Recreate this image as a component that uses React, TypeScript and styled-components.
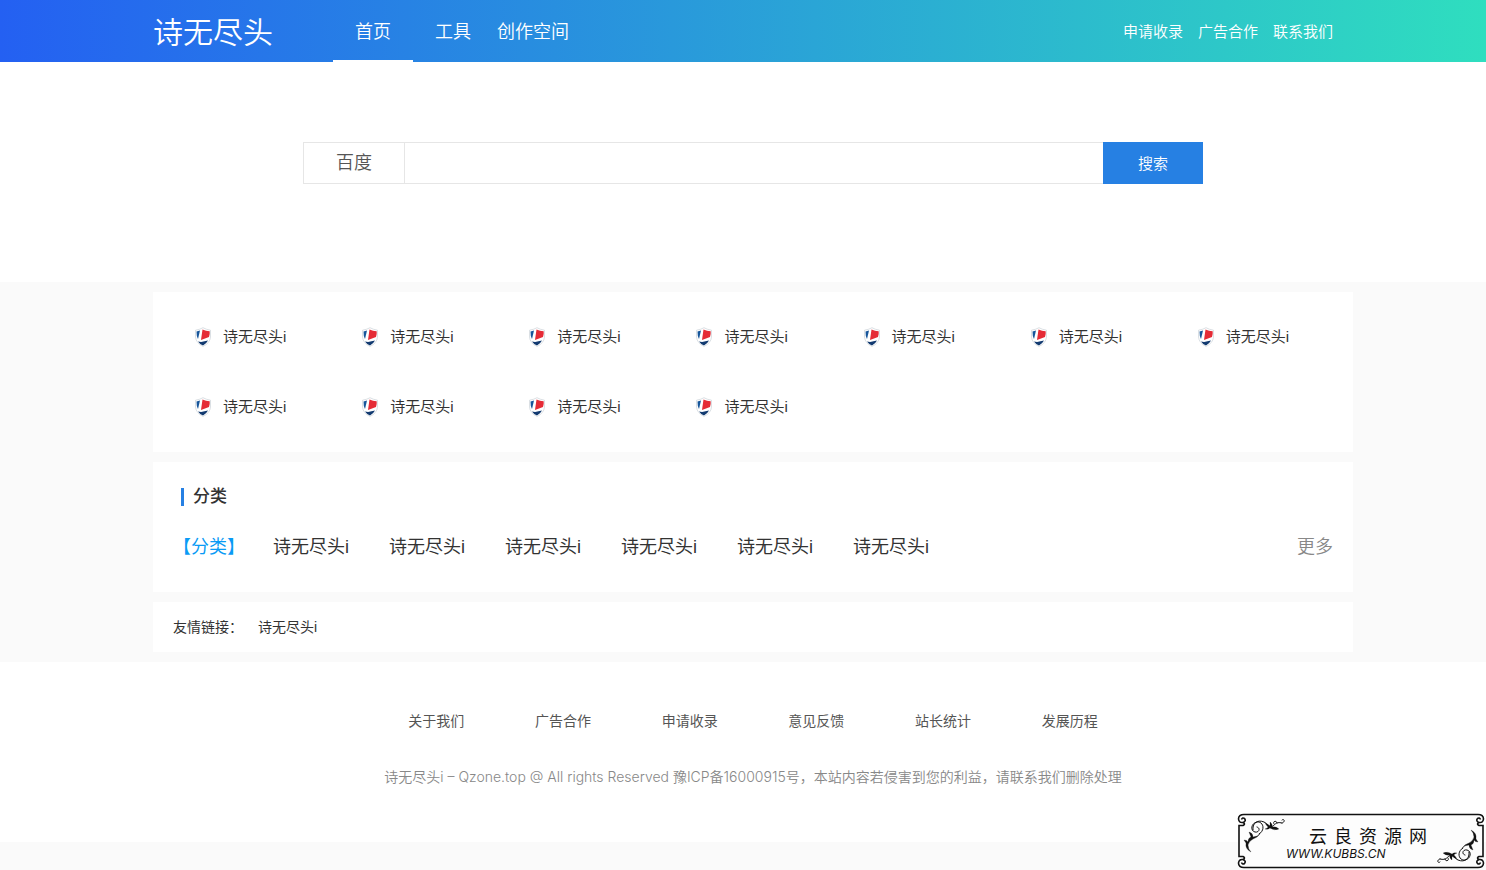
import React from "react";
import styled, { createGlobalStyle } from "styled-components";

const GlobalStyle = createGlobalStyle`
  * { box-sizing: border-box; }
  body {
    margin: 0;
    background: #fafafa;
    color: #333;
    font-family: "Liberation Sans", "Noto Sans CJK SC", sans-serif;
    font-size: 14px;
  }
  a { color: inherit; text-decoration: none; }
  ul { list-style: none; margin: 0; padding: 0; }
  button, input, select { font-family: inherit; }
`;

const Page = styled.div`
  position: relative;
  padding-bottom: 28px;
`;

const Container = styled.div`
  max-width: 1200px;
  margin: 0 auto;
`;

const Header = styled.header`
  padding-left: 20px;
  background: linear-gradient(90deg, #2460f2, #2fdebf);
  color: #fff;
  font-family: "Noto Sans CJK SC", sans-serif;
  font-weight: 350;
`;

const HeaderInner = styled(Container)`
  display: flex;
  height: 62px;
  padding-right: 20px;
`;

const Logo = styled.a`
  width: 180px;
  font-size: 30px;
  line-height: 60px;
`;

const Nav = styled.nav`
  display: flex;
  flex: 1;
`;

const NavLink = styled.a<{ $active?: boolean }>`
  width: 80px;
  border-bottom: 2px solid ${(p) => (p.$active ? "#fff" : "transparent")};
  font-size: 18px;
  line-height: 60px;
  text-align: center;
`;

const TopLinks = styled.nav`
  display: flex;
  gap: 15px;
  font-size: 15px;
  line-height: 62px;
`;

const SearchArea = styled.section`
  padding: 80px 0 98px 20px;
  background: #fff;
`;

const SearchForm = styled.form`
  display: flex;
  max-width: 900px;
  height: 42px;
  margin: 0 auto;
`;

const EngineSelect = styled.select`
  appearance: none;
  width: 102px;
  padding: 0;
  border: 1px solid #e6e6e6;
  border-radius: 0;
  background: #fff;
  color: #555;
  font-size: 18px;
  font-weight: 350;
  text-align: center;
  text-align-last: center;
`;

const SearchInput = styled.input`
  flex: 1;
  min-width: 0;
  padding: 0 10px;
  border: solid #e6e6e6;
  border-width: 1px 0;
  outline: none;
  font-size: 16px;
`;

const SearchButton = styled.button`
  width: 100px;
  padding: 0 0 2px;
  border: 0;
  background: #2680e3;
  color: #fff;
  font-size: 15px;
  font-weight: 350;
`;

const Main = styled.main`
  padding: 10px 0 10px 20px;
`;

const Stack = styled(Container)`
  display: grid;
  gap: 10px;
`;

const Card = styled.section`
  background: #fff;
`;

const SiteGrid = styled.ul`
  display: grid;
  grid-template-columns: repeat(7, 1fr);
  padding: 10px 15px;
`;

const SiteLink = styled.a`
  display: flex;
  align-items: center;
  gap: 10px;
  height: 70px;
  padding-left: 25px;
  font-size: 15px;
  line-height: 70px;
`;

const Category = styled(Card)`
  padding: 20px;
`;

const CategoryTitle = styled.h2`
  display: flex;
  align-items: center;
  gap: 9px;
  height: 30px;
  margin: 0 0 10px 8px;
  font-size: 17px;
  font-weight: 500;
  line-height: 32px;

  &::before {
    content: "";
    width: 3px;
    height: 18px;
    background: #2680e3;
  }
`;

const CategoryRow = styled.div`
  display: flex;
  height: 50px;
  font-size: 18px;
  line-height: 50px;
`;

const CategoryName = styled.a`
  width: 100px;
  color: #0a9bf5;
`;

const CategoryLinks = styled.ul`
  display: flex;
  flex: 1;
  gap: 40px;
`;

const MoreLink = styled.a`
  color: #888;
  font-weight: 350;
`;

const Friends = styled(Card)`
  display: flex;
  gap: 15px;
  padding: 0 20px;
  line-height: 50px;
`;

const Footer = styled.footer`
  padding: 34px 0 40px 20px;
  background: #fff;
  text-align: center;
`;

const FooterLinks = styled.nav`
  display: grid;
  grid-template-columns: repeat(6, 1fr);
  max-width: 760px;
  margin: 0 auto;
  color: #555;
  line-height: 50px;
`;

const Copyright = styled.p`
  margin: 6px 0 0;
  color: #888;
  font-family: Inter, "Noto Sans CJK SC", sans-serif;
  font-weight: 350;
  line-height: 50px;
`;

const Badge = styled.a`
  position: absolute;
  right: 0;
  bottom: 0;
  width: 250px;
  height: 58px;
`;

const ShieldIcon = () => (
  <svg width="20" height="20" viewBox="0 0 20 20" aria-hidden="true">
    <path d="M10 .7Q13 2.500 17.500 3.200V10Q17 16 10 19.500 3 16 2.500 10V3.200Q7 2.500 10 .7Z" fill="#fff" stroke="#ccd3d8" strokeWidth=".7" />
    <path d="M3.500 4.500 7 3.400 5 12Q3.300 9 3.500 4.500Z" fill="#17569b" />
    <path d="M9.500 2.500Q13 4 16.700 4.300 17 7 16 10L8 13Z" fill="#e52b36" />
    <path d="M5 14.500 8 15 15 13.500Q13.500 16.500 10 18.600 6.500 17 5 14.500Z" fill="#123a70" />
  </svg>
);

const Corner = () => (
  <path
    d="M125 2.500H8Q2.500 2.500 2.500 7Q3 11 7 10.500Q10.500 9 8.500 6.500Q6.500 5 5.500 7.500M7 10.500Q10 12 7 13.500H3V29"
    fill="none"
    stroke="#111"
    strokeWidth="1.600"
  />
);

const Flourish = () => (
  <g stroke="#111" strokeLinecap="round">
    <path
      d="M23 22C30 18 27 9 21 10C15 11 14 19 19 20C23 21 25 16 21 15M17 18C16 12 21 7 28 10C32 12 34 16 41 17M35 15C39 14 39 9 46 11M38 12C36 9 41 8 41 11M46 11C50 10 48 6 46 8"
      fill="none"
      strokeWidth="1"
    />
    <path d="M24 22Q21 26 17 27Q13 29 12 33Q12 37 15 40Q9 37 10 31L8 28Q11 28 12 30Q12 26 15 25L13 20Q17 21 17 25Q21 25 24 22Z" fill="#111" strokeWidth=".3" />
    <path d="M29 11Q32 13 34 14L34 10Q37 12 36 15Q40 14 43 17Q38 19 34 16Q32 18 29 17Q32 16 32 15Q30 13 29 11Z" fill="#111" strokeWidth=".2" />
  </g>
);

const Watermark = () => (
  <svg width="250" height="58" viewBox="0 0 250 58" role="img" aria-label="云良资源网">
    <rect x="3" y="3" width="244" height="52" fill="#fdfdfd" />
    <Corner />
    <g transform="translate(250 0) scale(-1 1)"><Corner /></g>
    <g transform="translate(0 58) scale(1 -1)"><Corner /></g>
    <g transform="rotate(180 125 29)"><Corner /></g>
    <Flourish />
    <g transform="rotate(180 125 29)"><Flourish /></g>
    <g fill="#111" fontStyle="italic">
      <text y="31" fontSize="18" fontWeight="400" fontStyle="normal" fontFamily="'Noto Sans CJK SC', sans-serif">
        <tspan x="73">云</tspan>
        <tspan x="98">良</tspan>
        <tspan x="123">资</tspan>
        <tspan x="148">源</tspan>
        <tspan x="173">网</tspan>
      </text>
      <text x="50" y="46" fontSize="12" fontFamily="Inter, sans-serif">
        WWW.KUBBS.CN
      </text>
    </g>
  </svg>
);

const siteName = "诗无尽头i";
const sites = Array.from({ length: 11 }, () => siteName);
const categoryItems = Array.from({ length: 6 }, () => siteName);
const topLinks = ["申请收录", "广告合作", "联系我们"];
const footerLinks = ["关于我们", "广告合作", "申请收录", "意见反馈", "站长统计", "发展历程"];

export default function App() {
  return (
    <Page>
      <GlobalStyle />
      <Header>
        <HeaderInner>
          <Logo href="#">诗无尽头</Logo>
          <Nav>
            <NavLink href="#" $active>首页</NavLink>
            <NavLink href="#">工具</NavLink>
            <NavLink href="#">创作空间</NavLink>
          </Nav>
          <TopLinks>
            {topLinks.map((label) => <a href="#" key={label}>{label}</a>)}
          </TopLinks>
        </HeaderInner>
      </Header>

      <SearchArea>
        <SearchForm onSubmit={(e) => e.preventDefault()}>
          <EngineSelect aria-label="搜索引擎">
            <option>百度</option>
          </EngineSelect>
          <SearchInput type="text" aria-label="搜索内容" />
          <SearchButton type="submit">搜索</SearchButton>
        </SearchForm>
      </SearchArea>

      <Main>
        <Stack>
          <Card>
            <SiteGrid>
              {sites.map((name, i) => (
                <li key={i}>
                  <SiteLink href="#"><ShieldIcon />{name}</SiteLink>
                </li>
              ))}
            </SiteGrid>
          </Card>
          <Category>
            <CategoryTitle>分类</CategoryTitle>
            <CategoryRow>
              <CategoryName href="#">【分类】</CategoryName>
              <CategoryLinks>
                {categoryItems.map((name, i) => <li key={i}><a href="#">{name}</a></li>)}
              </CategoryLinks>
              <MoreLink href="#">更多</MoreLink>
            </CategoryRow>
          </Category>
          <Friends>
            <span>友情链接：</span>
            <a href="#">{siteName}</a>
          </Friends>
        </Stack>
      </Main>

      <Footer>
        <FooterLinks>
          {footerLinks.map((label) => <a href="#" key={label}>{label}</a>)}
        </FooterLinks>
        <Copyright>
          诗无尽头i – Qzone.top @ All rights Reserved 豫ICP备16000915号，本站内容若侵害到您的利益，请联系我们删除处理
        </Copyright>
      </Footer>
      <Badge href="#"><Watermark /></Badge>
    </Page>
  );
}
